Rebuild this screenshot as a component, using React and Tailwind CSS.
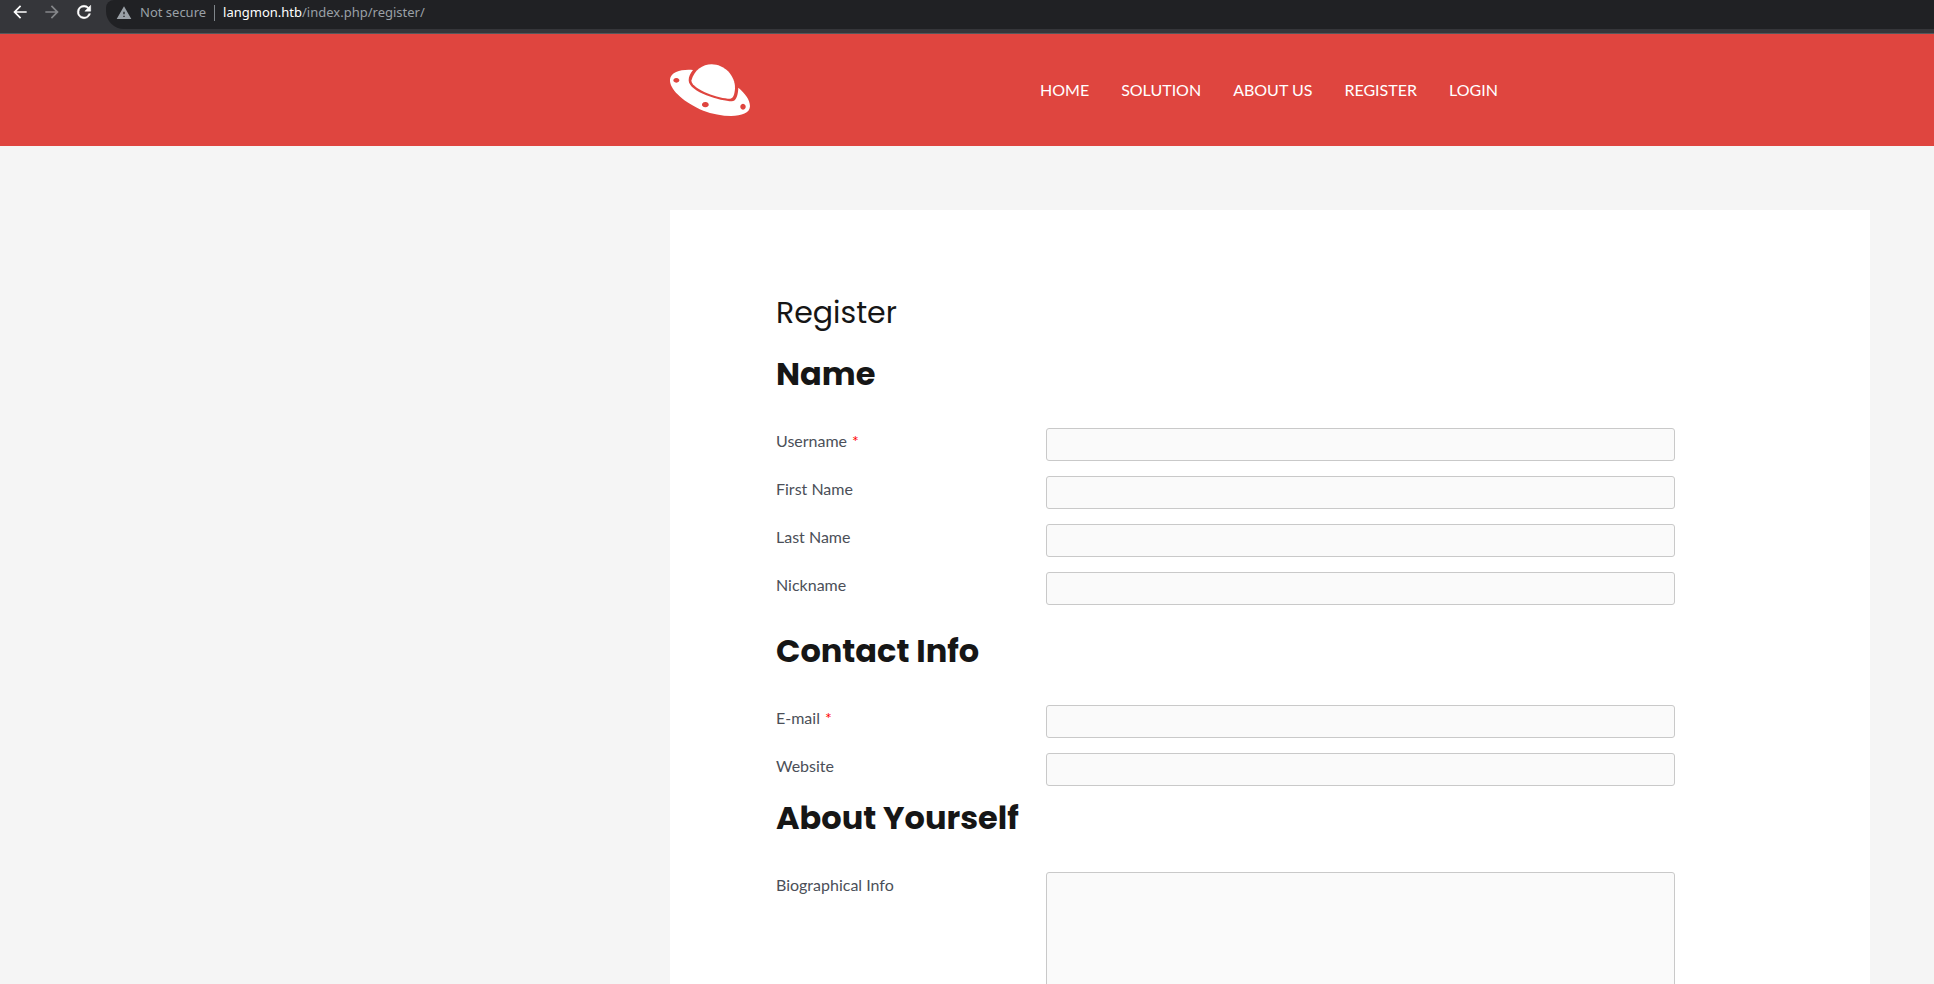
import React from "react";

const navItems = ["HOME", "SOLUTION", "ABOUT US", "REGISTER", "LOGIN"];

const inputClass =
  "block w-full rounded-[3px] border border-[#c9c9c9] bg-[#fafafa] px-2 text-base text-[#4b4f58] outline-none focus:border-[#888888]";

function BrowserBar() {
  return (
    <div className="flex h-[34px] shrink-0 items-start border-b border-[#55585c] bg-[#35363a] font-['Noto_Sans',sans-serif] text-[13px]">
      <div className="flex h-6 shrink-0 items-center gap-3 pr-3 pl-[10px]">
        <button type="button" aria-label="Back" className="text-white">
          <svg viewBox="0 0 24 24" className="size-5" fill="currentColor">
            <path d="M20 11H7.83l5.59-5.59L12 4l-8 8 8 8 1.41-1.41L7.83 13H20z" />
          </svg>
        </button>
        <button type="button" aria-label="Forward" className="text-[#85878a]">
          <svg viewBox="0 0 24 24" className="size-5" fill="currentColor">
            <path d="M12 4l-1.41 1.41L16.17 11H4v2h12.17l-5.58 5.59L12 20l8-8z" />
          </svg>
        </button>
        <button type="button" aria-label="Reload" className="text-white">
          <svg viewBox="0 0 24 24" className="size-5" fill="currentColor" stroke="currentColor" strokeWidth="0.6">
            <path d="M17.65 6.35A7.96 7.96 0 0 0 12 4a8 8 0 1 0 7.73 10h-2.08A6 6 0 1 1 12 6c1.66 0 3.14.69 4.22 1.78L13 11h7V4z" />
          </svg>
        </button>
      </div>
      <div className="flex h-[29px] grow items-start rounded-bl-[18px] rounded-tl-lg bg-[#202124] pl-[10px]">
        <div className="flex h-[25px] items-center">
          <svg viewBox="0 0 24 24" className="size-4 text-[#9aa0a6]" fill="currentColor">
            <path d="M1 21h22L12 2zm12-3h-2v-2h2zm0-4h-2v-4h2z" />
          </svg>
          <span className="ml-2 text-[#9aa0a6]">Not secure</span>
          <span className="mx-2 h-4 w-px bg-[#80868b]" />
          <span className="text-[#9aa0a6]">
            <span className="text-white">langmon.htb</span>/index.php/register/
          </span>
        </div>
      </div>
    </div>
  );
}

function Logo() {
  return (
    <svg viewBox="60 41 240 157" className="w-20" fill="#ffffff" aria-label="Home">
      <path
        fillRule="evenodd"
        d="M129 59C96 56 63 64 60 87C57 116 100 156 160 181C215 202 299 206 300 168C300 147 284 128 265 112C264 132 260 153 245 153C215 153 116 126 116 90C116 78 121 69 129 59ZM79 83a9 7 0 1 0 .1 0ZM166 155a10 8 0 1 0 .1 0ZM279 160a8 9 0 1 0 .1 0Z"
      />
      <path d="M124 91C132 60 158 42 185 42C222 42 256 75 255 114C254 132 250 144 241 145C212 146 128 119 124 91Z" />
    </svg>
  );
}

function Heading({ children, className }) {
  return (
    <h2 className={`font-['Poppins','Inter',sans-serif] text-[32px] leading-10 font-bold text-[#161616] ${className}`}>
      {children}
    </h2>
  );
}

function Field({ id, label, required, type = "text", multiline }) {
  return (
    <div className="grid grid-cols-[270px_minmax(0,629px)] items-start">
      <label htmlFor={id} className="leading-[26px]">
        {label}
        {required && <span className="ml-[5px] text-[#ff0000]">*</span>}
      </label>
      {multiline ? (
        <textarea id={id} className={`${inputClass} h-[180px] resize-none`} />
      ) : (
        <input id={id} type={type} required={required} className={`${inputClass} h-[33px]`} />
      )}
    </div>
  );
}

export default function App() {
  return (
    <div className="flex h-screen flex-col overflow-hidden bg-[#f5f5f5] font-['Lato',sans-serif] text-base text-[#4b4f58]">
      <BrowserBar />
      <header className="shrink-0 bg-[#df453f] px-16">
        <div className="ml-auto flex h-28 max-w-[1200px] items-center">
          <a href="#home">
            <Logo />
          </a>
          <nav className="ml-[290px] flex gap-8 text-white">
            {navItems.map((item) => (
              <a key={item} href="#nav">
                {item}
              </a>
            ))}
          </nav>
        </div>
      </header>
      <div className="grow px-16 pt-16">
        <main className="ml-auto max-w-[1200px] bg-white px-[106px] pt-[83px] pb-20">
          <h1 className="font-['Poppins','Inter',sans-serif] text-[30px] leading-10 text-[#161616]">Register</h1>
          <form>
            <Heading className="mt-[21px]">Name</Heading>
            <div className="mt-[34px] flex flex-col gap-[15px]">
              <Field id="username" label="Username" required />
              <Field id="first-name" label="First Name" />
              <Field id="last-name" label="Last Name" />
              <Field id="nickname" label="Nickname" />
            </div>
            <Heading className="mt-[26px]">Contact Info</Heading>
            <div className="mt-[34px] flex flex-col gap-[15px]">
              <Field id="email" label="E-mail" type="email" required />
              <Field id="website" label="Website" type="url" />
            </div>
            <Heading className="mt-3">About Yourself</Heading>
            <div className="mt-[34px]">
              <Field id="bio" label="Biographical Info" multiline />
            </div>
          </form>
        </main>
      </div>
    </div>
  );
}
